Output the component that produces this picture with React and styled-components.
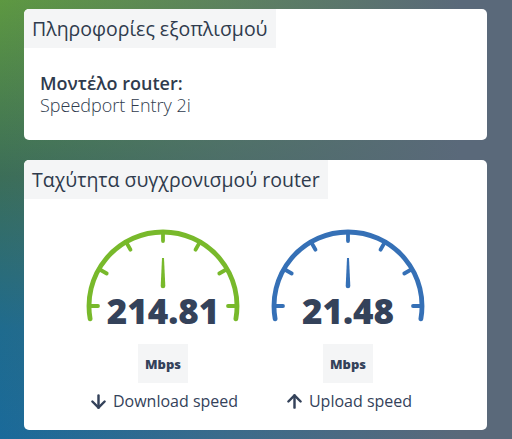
import React from "react";
import styled, { createGlobalStyle } from "styled-components";
import { ArrowDown, ArrowUp } from "lucide-react";

const GlobalStyle = createGlobalStyle`
  body {
    margin: 0;
    font-family: "Open Sans", "Noto Sans", sans-serif;
    color: #2f3b4d;
  }
`;

const Page = styled.div`
  box-sizing: border-box;
  width: 512px;
  height: 439px;
  padding: 9px 25px 0 24px;
  overflow: hidden;
  display: flex;
  flex-direction: column;
  gap: 20px;
  background:
    linear-gradient(
      90deg,
      rgba(92, 108, 124, 0) 0%,
      rgba(92, 108, 124, 0.5) 45%,
      rgba(90, 105, 122, 1) 90%
    ),
    linear-gradient(180deg, #5d9841 0%, #3c6e58 40%, #1f6b8e 75%, #1a6a9a 100%);
`;

const Card = styled.section`
  background: #fff;
  border-radius: 5px;
  height: ${(p) => p.$h}px;
  display: flex;
  flex-direction: column;
  align-items: flex-start;
`;

const Tab = styled.h2`
  margin: 0;
  height: 39px;
  display: flex;
  align-items: center;
  padding: 0 8px;
  background: #f4f5f6;
  border-top-left-radius: 5px;
  font-size: 19.5px;
  font-weight: 400;
  color: #2f3b4d;
`;

const Info = styled.div`
  padding: 24px 16px 0;
  font-size: 18px;
  line-height: 22px;
`;

const Label = styled.div`
  font-weight: 600;
`;

const Value = styled.div`
  font-weight: 300;
`;

const Gauges = styled.div`
  align-self: stretch;
  display: flex;
  justify-content: center;
  gap: 15px;
  padding-top: 25px;
`;

const Gauge = styled.div`
  width: 170px;
  display: flex;
  flex-direction: column;
  align-items: center;
`;

const Number = styled.div`
  margin-top: -31px;
  font-size: 35px;
  line-height: 36px;
  font-weight: 800;
  color: #34425a;
`;

const Unit = styled.div`
  margin-top: 15px;
  width: 50px;
  height: 39px;
  display: flex;
  align-items: center;
  justify-content: center;
  background: #f4f5f6;
  font-size: 13px;
  font-weight: 800;
  color: #34425a;
`;

const Caption = styled.div`
  margin-top: 7px;
  display: flex;
  align-items: center;
  gap: 4px;
  font-size: 16px;
  color: #34425a;
  white-space: nowrap;
`;

const CX = 85;
const CY = 82;
const R = 74;

const pt = (deg, r) => {
  const a = (deg * Math.PI) / 180;
  return [CX + r * Math.cos(a), CY - r * Math.sin(a)];
};

const Dial = ({ color }) => {
  const [sx, sy] = pt(-10, R);
  const [ex, ey] = pt(190, R);
  const ticks = [0, 30, 60, 90, 120, 150, 180];
  return (
    <svg width="170" height="100" viewBox="0 0 170 100">
      <path
        d={`M ${ex} ${ey} A ${R} ${R} 0 1 1 ${sx} ${sy}`}
        fill="none"
        stroke={color}
        strokeWidth="4.8"
        strokeLinecap="round"
      />
      {ticks.map((t) => {
        const [x1, y1] = pt(t, R - 1);
        const [x2, y2] = pt(t, R - 9);
        return (
          <line
            key={t}
            x1={x1}
            y1={y1}
            x2={x2}
            y2={y2}
            stroke={color}
            strokeWidth="3.8"
            strokeLinecap="round"
          />
        );
      })}
      <path
        d={`M ${CX - 1} ${CY - 48} L ${CX + 1} ${CY - 48} L ${CX + 2.3} ${CY - 20} A 2.3 2.3 0 0 1 ${CX - 2.3} ${CY - 20} Z`}
        fill={color}
      />
    </svg>
  );
};

const speeds = [
  { value: "214.81", color: "#78b92b", label: "Download speed", Icon: ArrowDown },
  { value: "21.48", color: "#3570b6", label: "Upload speed", Icon: ArrowUp },
];

export default function App() {
  return (
    <Page>
      <GlobalStyle />
      <Card $h={131}>
        <Tab>Πληροφορίες εξοπλισμού</Tab>
        <Info>
          <Label>Μοντέλο router:</Label>
          <Value>Speedport Entry 2i</Value>
        </Info>
      </Card>
      <Card $h={270}>
        <Tab>Ταχύτητα συγχρονισμού router</Tab>
        <Gauges>
          {speeds.map(({ value, color, label, Icon }) => (
            <Gauge key={label}>
              <Dial color={color} />
              <Number>{value}</Number>
              <Unit>Mbps</Unit>
              <Caption>
                <Icon size={21} strokeWidth={2.8} />
                {label}
              </Caption>
            </Gauge>
          ))}
        </Gauges>
      </Card>
    </Page>
  );
}
